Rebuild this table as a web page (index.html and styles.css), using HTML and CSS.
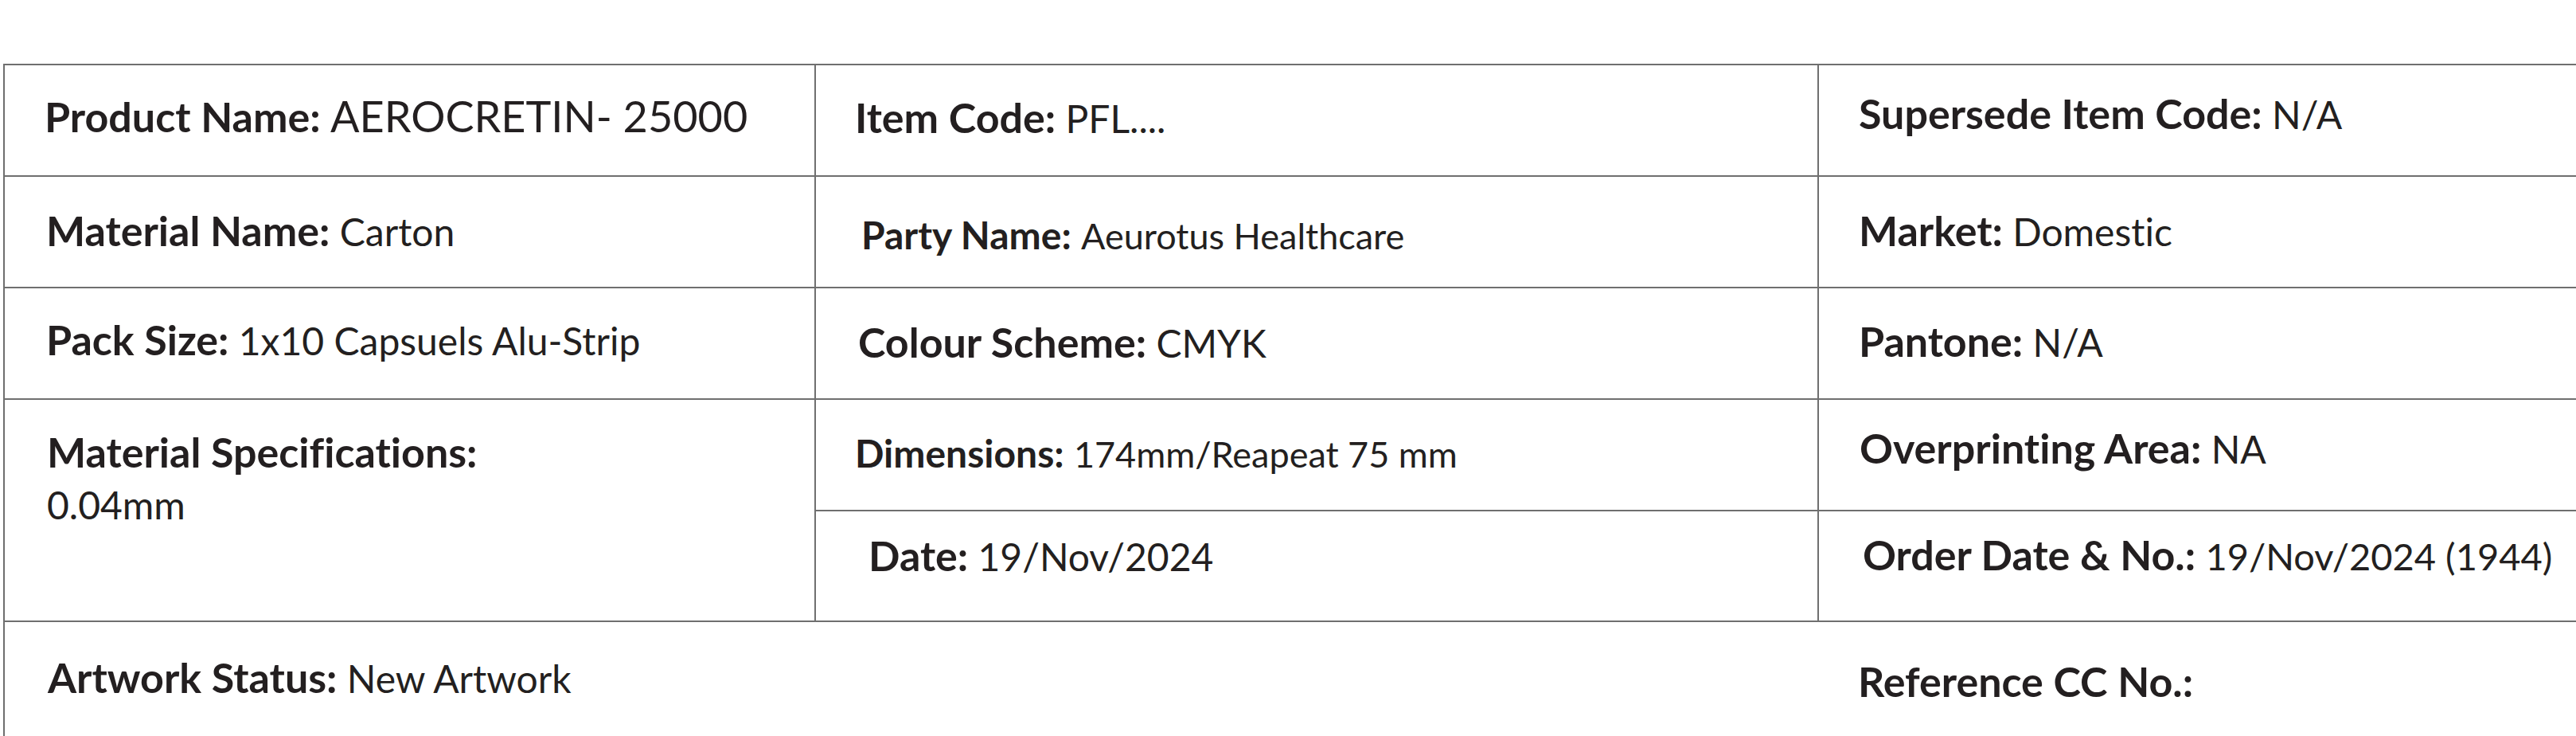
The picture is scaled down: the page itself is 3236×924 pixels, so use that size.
FILE: index.html
```html
<!DOCTYPE html>
<html lang="en">
<head>
<meta charset="utf-8">
<title>Artwork Specification</title>
<link rel="stylesheet" href="styles.css">
</head>
<body>
<div class="sheet">
  <div class="cell col1 cell--product"><b class="label">Product Name:</b> <span class="value value--lg">AEROCRETIN- 25000</span></div>
  <div class="cell col2 cell--item"><b class="label">Item Code:</b> <span class="value">PFL....</span></div>
  <div class="cell col3 cell--supersede"><b class="label">Supersede Item Code:</b> <span class="value">N/A</span></div>

  <div class="cell col1 cell--material"><b class="label">Material Name:</b> <span class="value">Carton</span></div>
  <div class="cell col2 cell--party"><b class="label label--sm">Party Name:</b> <span class="value value--sm">Aeurotus Healthcare</span></div>
  <div class="cell col3 cell--market"><b class="label">Market:</b> <span class="value">Domestic</span></div>

  <div class="cell col1 cell--pack"><b class="label">Pack Size:</b> <span class="value">1x10 Capsuels Alu-Strip</span></div>
  <div class="cell col2 cell--colour"><b class="label">Colour Scheme:</b> <span class="value">CMYK</span></div>
  <div class="cell col3 cell--pantone"><b class="label">Pantone:</b> <span class="value">N/A</span></div>

  <div class="cell col1 cell--spec">
    <b class="label label--block">Material Specifications:</b>
    <span class="value value--block">0.04mm</span>
  </div>
  <div class="cell col2 cell--dimensions"><b class="label label--sm">Dimensions:</b> <span class="value value--sm">174mm/Reapeat 75 mm</span></div>
  <div class="cell col3 cell--overprint"><b class="label">Overprinting Area:</b> <span class="value">NA</span></div>

  <div class="cell col2 cell--date"><b class="label">Date:</b> <span class="value">19/Nov/2024</span></div>
  <div class="cell col3 cell--order"><b class="label">Order Date &amp; No.:</b> <span class="value value--order">19/Nov/2024 (1944)</span></div>

  <div class="cell cell--last cell--artwork"><b class="label">Artwork Status:</b> <span class="value">New Artwork</span></div>
  <div class="cell cell--last col3 cell--reference"><b class="label">Reference CC No.:</b></div>
</div>
</body>
</html>
```
FILE: styles.css
```css
html, body {
  margin: 0;
  background: #ffffff;
}

body {
  padding: 80px 0 0 4px;
  font-family: "Lato", "Open Sans", sans-serif;
  font-variant-ligatures: none;
  color: #231f20;
  overflow: hidden;
}

.sheet {
  display: grid;
  grid-template-columns: 1019px 1260px 1fr;
  grid-template-rows: 140px 140px 140px 140px 139px 146px;
  border-top: 2px solid #6f6f6f;
  border-left: 2px solid #6f6f6f;
}

.cell {
  box-sizing: border-box;
  border-bottom: 2px solid #6f6f6f;
  font-size: 48px;
  line-height: 1;
  white-space: nowrap;
  padding-top: 40px;
}

.col1 { grid-column: 1; padding-left: 52px; border-right: 2px solid #6f6f6f; }
.col2 { grid-column: 2; padding-left: 49px; border-right: 2px solid #6f6f6f; }
.col3 { grid-column: 3; padding-left: 50px; }

.label {
  font-weight: 700;
  font-size: 52px;
}
.label--sm { font-size: 48px; }
.label--block { display: block; }

.value { font-weight: 400; font-size: 48px; }
.value--lg { font-size: 54px; }
.value--sm { font-size: 45px; }
.value--order { font-size: 47px; }
.value--block { display: block; margin-top: 17px; }

/* row 1 */
.cell--product { padding-top: 37px; padding-left: 50px; }
.cell--item { padding-top: 39px; }
.cell--supersede { padding-top: 34px; }

/* row 2 */
.cell--material { padding-top: 41px; }
.cell--party { padding-top: 49px; padding-left: 57px; }
.cell--market { padding-top: 41px; }

/* row 3 */
.cell--pack { padding-top: 38px; }
.cell--colour { padding-top: 41px; padding-left: 53px; }
.cell--pantone { padding-top: 40px; }

/* rows 4–5 */
.cell--spec { grid-row: span 2; padding-top: 39px; padding-left: 53px; }
.cell--dimensions { padding-top: 43px; }
.cell--overprint { padding-top: 34px; padding-left: 51px; }
.cell--date { padding-top: 29px; padding-left: 66px; }
.cell--order { padding-top: 28px; padding-left: 55px; }

/* last row */
.cell--last { border-bottom: 0; }
.cell--artwork { grid-column: 1 / span 2; padding-top: 43px; padding-left: 54px; }
.cell--reference { padding-top: 48px; padding-left: 49px; }
```
